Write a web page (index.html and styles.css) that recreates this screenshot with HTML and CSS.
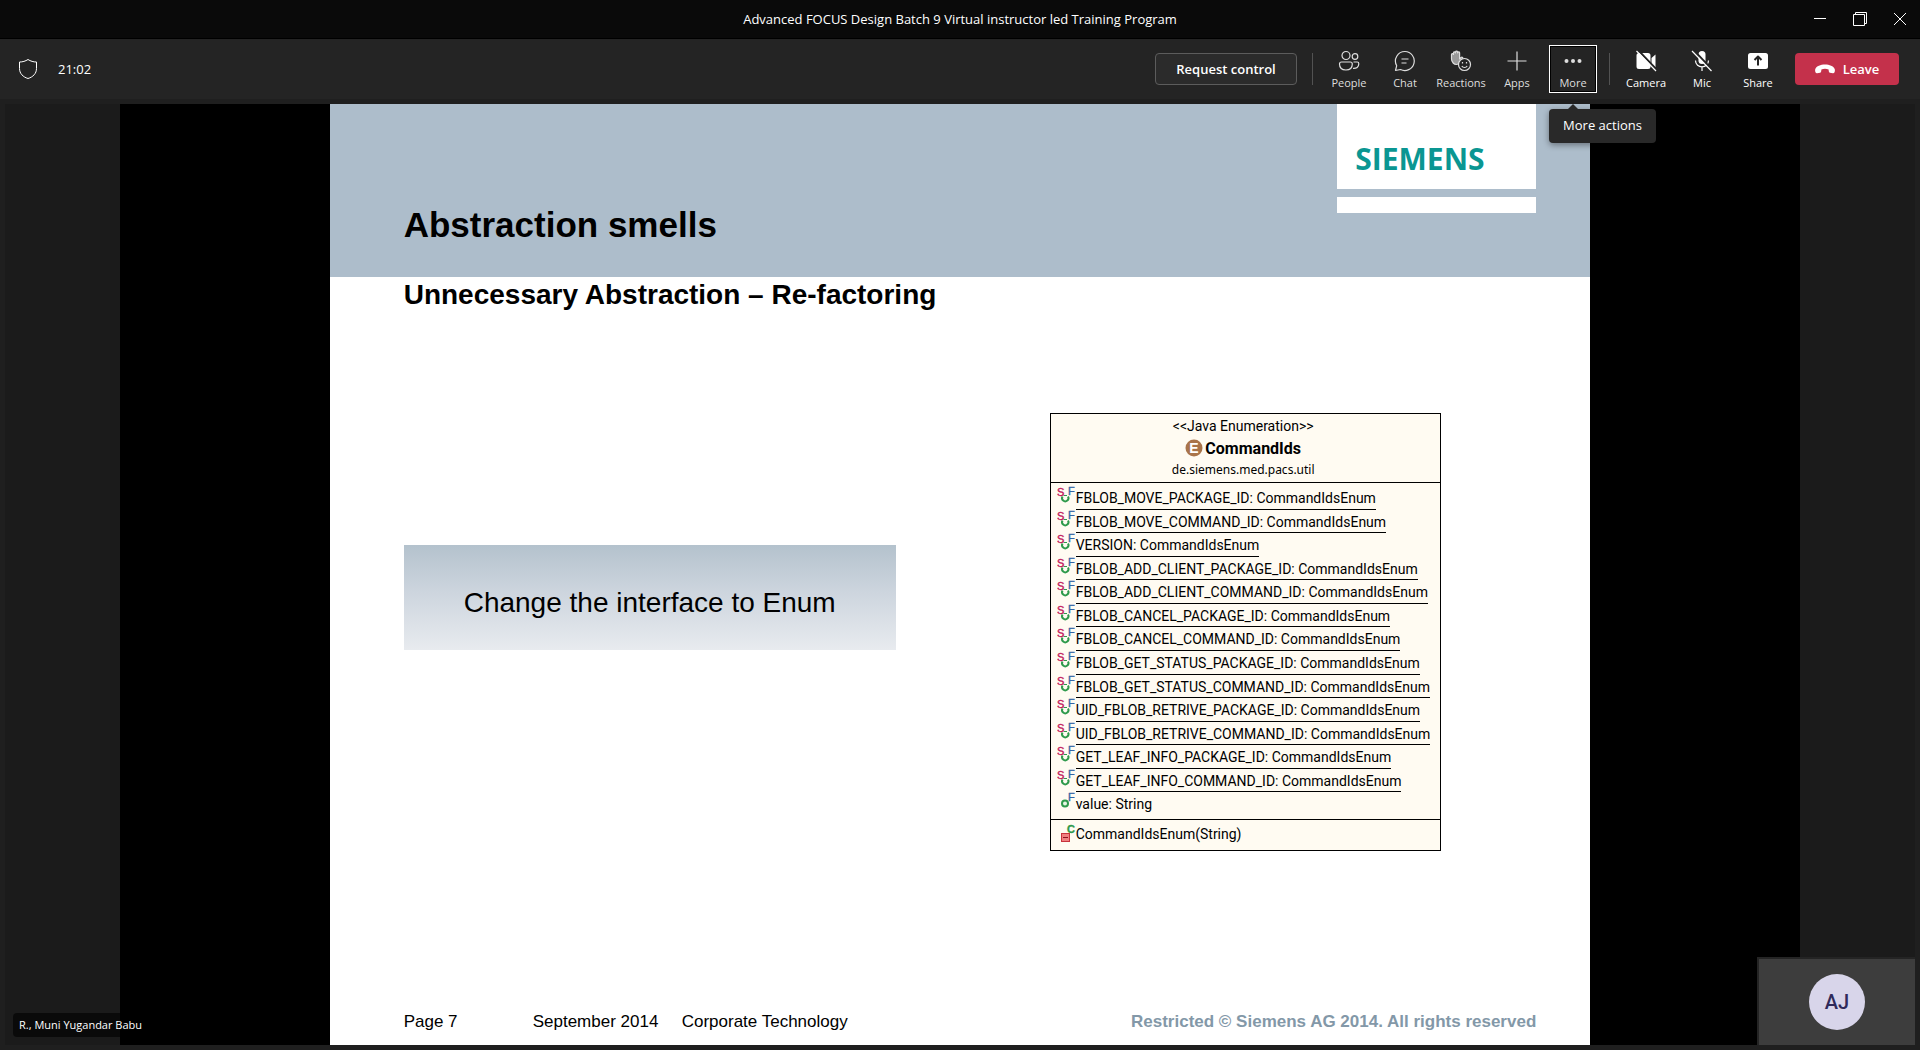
FILE: index.html
```html
<!DOCTYPE html>
<html lang="en">
<head>
<meta charset="utf-8">
<meta name="viewport" content="width=device-width, initial-scale=1">
<title>Advanced FOCUS Design Batch 9 Virtual instructor led Training Program</title>
<link rel="stylesheet" href="styles.css">
</head>
<body>
<svg class="defs" aria-hidden="true">
  <symbol id="static-final" viewBox="0 -4 20 22">
    <path d="M5.500 10.500a3.200 3.200 0 1 0 5.500 0" fill="none" stroke="#2f9a4c" stroke-width="2"/>
    <path d="M6.500 9.500h3.500" fill="none" stroke="#2f9a4c"/>
    <text class="mark mark-s" x="0" y="10">S</text>
    <text class="mark mark-f" x="11" y="9">F</text>
  </symbol>
  <symbol id="final" viewBox="0 -4 20 22">
    <circle cx="8" cy="11.500" r="3" fill="#e8f6e4" stroke="#2f9a4c" stroke-width="2"/>
    <text class="mark mark-f" x="11" y="9">F</text>
  </symbol>
  <symbol id="constructor" viewBox="0 -4 20 22">
    <rect x="4.500" y="8.500" width="8" height="8" fill="#f08080" stroke="#c8323c"/>
    <path d="M6 12.500h5" stroke="#8c1420" fill="none"/>
    <text class="mark mark-c" x="10" y="8">C</text>
  </symbol>
</svg>

<header class="titlebar">
  <h1 class="window-title">Advanced FOCUS Design Batch 9 Virtual instructor led Training Program</h1>
  <div class="window-buttons">
    <button class="window-button" type="button" aria-label="Minimize"><svg width="14" height="14" viewBox="0 0 14 14"><path d="M1 6.500h12"/></svg></button>
    <button class="window-button" type="button" aria-label="Restore"><svg width="14" height="14" viewBox="0 0 14 14"><path d="M.5 2.500h11v11H.5zM2.500 2.500v-2h11v11h-2"/></svg></button>
    <button class="window-button" type="button" aria-label="Close"><svg width="14" height="14" viewBox="0 0 14 14"><path d="M1 1l12 12M13 1L1 13"/></svg></button>
  </div>
</header>

<nav class="toolbar">
  <div class="status">
    <svg width="20" height="22" viewBox="0 0 20 22"><path d="M10 1.500C7.500 3.200 4.500 4 1.500 4v6.500c0 5 3.500 8.500 8.500 10 5-1.500 8.500-5 8.500-10V4c-3 0-6-.8-8.500-2.500z"/></svg>
    <span>21:02</span>
  </div>
  <div class="controls">
    <button class="request" type="button">Request control</button>
    <span class="divider"></span>
    <div class="group">
      <button class="tool" type="button"><svg viewBox="0 0 22 22"><circle cx="8" cy="5.500" r="4"/><circle cx="17" cy="6.500" r="2.800"/><path d="M3.500 12h8.800c1.200 0 2 .8 2 2 0 4-2.500 6-6.400 6s-6.400-2-6.400-6c0-1.200.8-2 2-2zM15.500 12h3.800c.9 0 1.500.8 1.500 1.800 0 3.400-2.400 4.800-5.800 4.500"/></svg>People</button>
      <button class="tool" type="button"><svg viewBox="0 0 22 22"><path d="M11 1.500a9.500 9.500 0 1 1-4.500 18L1.500 20.500l1.200-4.800A9.500 9.500 0 0 1 11 1.500zM7.500 9h7M7.500 13h5"/></svg>Chat</button>
      <button class="tool" type="button"><svg viewBox="0 0 22 22"><path class="hand" d="M1.500 9V4.500c0-1.300 1.800-1.300 2 0V2.800c.2-1.300 1.800-1.300 2 0V2c.2-1.300 1.900-1.300 2.100 0v.8c.2-1.200 1.900-1.200 2 0V9l1.500-1.500c1-.8 2.300.2 1.600 1.300L10 12.500c-1.600 2.500-5 2.600-6.800.5C1.900 11.500 1.500 10.500 1.500 9z"/><circle class="face" cx="14.500" cy="14.500" r="6"/><path d="M11.800 16c1.200 2 4.200 2 5.400 0M12.500 12v1.500M16.500 12v1.500"/></svg>Reactions</button>
      <button class="tool" type="button"><svg viewBox="0 0 22 22"><path d="M11 1.500v19M1.500 11h19"/></svg>Apps</button>
      <div class="more-wrap">
        <button class="tool tool-focus" type="button" aria-describedby="more-tip"><svg viewBox="0 0 22 22"><g class="solid-dim"><circle cx="4.500" cy="11" r="2"/><circle cx="11" cy="11" r="2"/><circle cx="17.500" cy="11" r="2"/></g></svg>More</button>
        <div class="tooltip" id="more-tip" role="tooltip">More actions</div>
      </div>
    </div>
    <span class="divider"></span>
    <div class="group bright">
      <button class="tool" type="button"><svg viewBox="0 0 22 22"><path class="solid" d="M1.500 5.500A2.500 2.500 0 0 1 4 3h9a2.500 2.500 0 0 1 2.500 2.500v11A2.500 2.500 0 0 1 13 19H4a2.500 2.500 0 0 1-2.500-2.500zM16.500 8l4-3.500v13l-4-3.500z"/><path class="cut" d="M3 0l19 20"/><path d="M1.500 1l19.500 20"/></svg>Camera</button>
      <button class="tool" type="button"><svg viewBox="0 0 22 22"><rect class="solid" x="7.500" y="1" width="7" height="13" rx="3.500"/><path d="M4.500 10.500c0 8.500 13 8.500 13 0M11 17v4"/><path class="cut" d="M2.500 0l19 20"/><path d="M1 1l19.500 20"/></svg>Mic</button>
      <button class="tool" type="button"><svg viewBox="0 0 22 22"><rect class="solid" x="1" y="3" width="20" height="16" rx="2.500"/><path class="ink" d="M11 15.500v-9M7.500 10L11 6.500l3.500 3.500"/></svg>Share</button>
    </div>
    <button class="leave" type="button"><svg width="20" height="10" viewBox="0 0 20 10"><path d="M10 .5C5.500.5 1.500 2 .3 5c-.4 1.200-.2 2.500.3 3.500.3.6.8.9 1.500.8l3-.6c.7-.2 1-.7 1.100-1.400l.2-1.900c2.300-.8 4.900-.8 7.200 0l.2 1.900c.1.700.4 1.200 1.100 1.400l3 .6c.7.1 1.200-.2 1.500-.8.5-1 .7-2.300.3-3.500C18.500 2 14.500.5 10 .5z"/></svg>Leave</button>
  </div>
</nav>

<main class="stage">
  <section class="video">
    <article class="slide">
      <div class="banner">
        <h2 class="slide-title">Abstraction smells</h2>
        <div class="brand">
          <div class="brand-name">SIEMENS</div>
          <div class="brand-strip"></div>
        </div>
      </div>
      <h3 class="slide-subtitle">Unnecessary Abstraction – Re-factoring</h3>
      <div class="slide-body">
        <p class="callout">Change the interface to Enum</p>
        <div class="uml">
          <div class="uml-head">
            <span class="uml-stereotype">&lt;&lt;Java Enumeration&gt;&gt;</span>
            <span class="uml-name"><svg width="18" height="20" viewBox="0 0 18 20"><circle cx="9" cy="10" r="8.500" fill="#a9744a"/><text class="enum-mark" x="9" y="15">E</text></svg>CommandIds</span>
            <span class="uml-package">de.siemens.med.pacs.util</span>
          </div>
          <ul class="uml-fields">
            <li><svg><use href="#static-final"/></svg><span class="static">FBLOB_MOVE_PACKAGE_ID: CommandIdsEnum</span></li>
            <li><svg><use href="#static-final"/></svg><span class="static">FBLOB_MOVE_COMMAND_ID: CommandIdsEnum</span></li>
            <li><svg><use href="#static-final"/></svg><span class="static">VERSION: CommandIdsEnum</span></li>
            <li><svg><use href="#static-final"/></svg><span class="static">FBLOB_ADD_CLIENT_PACKAGE_ID: CommandIdsEnum</span></li>
            <li><svg><use href="#static-final"/></svg><span class="static">FBLOB_ADD_CLIENT_COMMAND_ID: CommandIdsEnum</span></li>
            <li><svg><use href="#static-final"/></svg><span class="static">FBLOB_CANCEL_PACKAGE_ID: CommandIdsEnum</span></li>
            <li><svg><use href="#static-final"/></svg><span class="static">FBLOB_CANCEL_COMMAND_ID: CommandIdsEnum</span></li>
            <li><svg><use href="#static-final"/></svg><span class="static">FBLOB_GET_STATUS_PACKAGE_ID: CommandIdsEnum</span></li>
            <li><svg><use href="#static-final"/></svg><span class="static">FBLOB_GET_STATUS_COMMAND_ID: CommandIdsEnum</span></li>
            <li><svg><use href="#static-final"/></svg><span class="static">UID_FBLOB_RETRIVE_PACKAGE_ID: CommandIdsEnum</span></li>
            <li><svg><use href="#static-final"/></svg><span class="static">UID_FBLOB_RETRIVE_COMMAND_ID: CommandIdsEnum</span></li>
            <li><svg><use href="#static-final"/></svg><span class="static">GET_LEAF_INFO_PACKAGE_ID: CommandIdsEnum</span></li>
            <li><svg><use href="#static-final"/></svg><span class="static">GET_LEAF_INFO_COMMAND_ID: CommandIdsEnum</span></li>
            <li><svg><use href="#final"/></svg><span>value: String</span></li>
          </ul>
          <div class="uml-methods"><svg><use href="#constructor"/></svg><span>CommandIdsEnum(String)</span></div>
        </div>
      </div>
      <footer class="slide-footer">
        <span class="page">Page 7</span>
        <span class="date">September 2014</span>
        <span>Corporate Technology</span>
        <span class="rights">Restricted © Siemens AG 2014. All rights reserved</span>
      </footer>
    </article>
  </section>
  <div class="presenter">R., Muni Yugandar Babu</div>
  <div class="self-view"><span class="avatar">AJ</span></div>
</main>
</body>
</html>
```

FILE: styles.css
```css
* { box-sizing: border-box; }

body {
  margin: 0;
  min-height: 100vh;
  display: flex;
  flex-direction: column;
  background: #1f1f1f;
  color: #fff;
  font-family: "Open Sans", "Noto Sans", sans-serif;
  font-size: 13px;
}

h1, h2, h3, p, ul { margin: 0; padding: 0; }
button { font: inherit; color: inherit; padding: 0; border: 0; background: none; }
svg { flex: none; fill: none; }
.defs { position: absolute; width: 0; height: 0; }

/* Window title bar */
.titlebar {
  display: grid;
  grid-template-columns: 1fr auto 1fr;
  align-items: center;
  height: 39px;
  background: #0a0a0a;
  border-bottom: 1px solid #000;
}
.window-title { grid-column: 2; font-size: 13px; font-weight: 400; line-height: 18px; }
.window-buttons { display: flex; justify-content: flex-end; }
.window-button { display: grid; place-items: center; width: 40px; height: 38px; }
.window-button svg { stroke: #fff; }

/* Meeting toolbar */
.toolbar {
  display: flex;
  justify-content: space-between;
  align-items: center;
  height: 60px;
  padding: 0 21px 0 18px;
  background: #242424;
}
.status { display: flex; align-items: center; gap: 20px; font-size: 13px; }
.status svg { stroke: #fff; }
.controls { display: flex; align-items: center; gap: 12px; }
.request {
  width: 142px;
  height: 32px;
  margin-right: 3px;
  border: 1px solid #5c5c5c;
  border-radius: 4px;
  background: #2b2b2b;
  font-weight: 600;
  line-height: 18px;
}
.divider { width: 1px; height: 32px; background: #525252; }
.group { display: flex; gap: 8px; color: #dedede; }
.bright { color: #fff; }
.tool {
  display: flex;
  flex-direction: column;
  align-items: center;
  gap: 4px;
  width: 48px;
  height: 48px;
  padding-top: 5px;
  font-size: 11px;
  line-height: 14px;
}
.tool svg { width: 22px; height: 22px; stroke: currentColor; stroke-width: 1.2; stroke-linejoin: round; }
.tool .solid { fill: #fff; stroke: none; }
.tool .solid-dim { fill: #dedede; stroke: none; }
.tool .hand { fill: #9a9a9a; }
.tool .face { fill: #242424; }
.tool .cut { stroke: #242424; stroke-width: 2; }
.tool .ink { stroke: #242424; stroke-width: 2; }
.tool-focus { outline: 1px solid #fff; outline-offset: -1px; background: #242424; border: 2px solid #000; padding-top: 3px; }
.more-wrap { position: relative; }
.tooltip {
  position: absolute;
  z-index: 2;
  top: 64px;
  left: 0;
  width: 107px;
  padding-bottom: 2px;
  border-radius: 4px;
  background: #292929;
  color: #fff;
  text-align: center;
  line-height: 32px;
  box-shadow: 0 2px 6px rgba(0, 0, 0, .4);
}
.tooltip::before {
  content: "";
  position: absolute;
  left: 19px;
  bottom: 100%;
  border: 5px solid transparent;
  border-top-width: 0;
  border-bottom-color: #292929;
}
.leave {
  display: flex;
  justify-content: center;
  align-items: center;
  gap: 8px;
  width: 104px;
  height: 32px;
  margin-left: 1px;
  border-radius: 4px;
  background: #c4314b;
  font-weight: 600;
}
.leave svg { fill: #fff; }

/* Shared content */
.stage {
  position: relative;
  flex: 1;
  display: flex;
  justify-content: center;
  margin: 5px;
  background: #1b1b1b;
}
.video { display: flex; justify-content: center; width: 88%; background: #000; }
.slide {
  display: flex;
  flex-direction: column;
  width: 75%;
  background: #fff;
  color: #000;
  font-family: "Liberation Sans", Arial, sans-serif;
}
.banner {
  display: flex;
  justify-content: space-between;
  height: 173px;
  padding: 0 54px 0 74px;
  background: #adbdcb;
}
.slide-title { align-self: flex-end; margin-bottom: 32px; font-size: 35px; line-height: 40px; }
.brand { width: 199px; }
.brand-name {
  height: 85px;
  padding: 35px 0 0 18px;
  background: #fff;
  color: #0a9692;
  font: 700 30px/40px "Open Sans", sans-serif;
}
.brand-strip { height: 16px; margin-top: 8px; background: #fff; }
.slide-subtitle { padding: 2px 74px 0; font-size: 28px; line-height: 32px; }
.slide-body {
  flex: 1;
  display: flex;
  align-items: flex-start;
  gap: 154px;
  padding: 102px 54px 0 74px;
}
.callout {
  width: 492px;
  height: 105px;
  margin-top: 132px;
  background: linear-gradient(#b4c2cd, #cdd5de 45%, #e8ebef);
  font-size: 28px;
  line-height: 116px;
  text-align: center;
}
.slide-footer {
  display: flex;
  align-items: center;
  padding: 0 54px 13px 74px;
  font-size: 17px;
  line-height: 20px;
}
.page { width: 129px; }
.date { width: 149px; }
.rights { margin-left: auto; color: #8398a8; font-weight: 700; }

/* Class diagram box */
.uml {
  display: flex;
  flex-direction: column;
  width: 391px;
  height: 438px;
  border: 1px solid #000;
  background: #fffbf2;
  font-family: Roboto, "Liberation Sans", sans-serif;
  font-size: 14px;
  line-height: 19px;
}
.uml-head {
  flex: none;
  display: flex;
  flex-direction: column;
  align-items: center;
  height: 68px;
  padding: 3px 4px 0 0;
}
.uml-name { display: flex; align-items: center; gap: 2px; height: 24px; font-size: 16px; font-weight: 700; }
.enum-mark { fill: #fff; font: 700 14px "Liberation Sans", sans-serif; text-anchor: middle; }
.uml-package { font-family: "Noto Sans", sans-serif; font-size: 12px; }
.uml-fields {
  flex: 1;
  display: grid;
  grid-auto-rows: 1fr;
  padding: 3px 6px;
  border-top: 1px solid #000;
  list-style: none;
}
.uml-fields li { display: flex; align-items: stretch; white-space: nowrap; }
.uml-fields svg, .uml-methods svg { width: 20px; height: 22px; margin: -4px -1px 0 0; }
.uml-fields span { padding-top: 3px; }
.static { border-bottom: 1px solid #000; }
.uml-methods {
  flex: none;
  display: flex;
  height: 31px;
  padding: 5px 6px 0;
  border-top: 1px solid #000;
}
.mark { font: 11px "Liberation Sans", sans-serif; stroke-width: .4px; }
.mark-s { fill: #c2185b; stroke: #c2185b; }
.mark-f { fill: #3465a4; stroke: #3465a4; }
.mark-c { fill: #2f9a4c; stroke: #2f9a4c; font-weight: 700; }

/* Overlays on the shared content */
.presenter {
  position: absolute;
  left: 8px;
  bottom: 8px;
  padding: 0 6px;
  border-radius: 4px;
  background: rgba(0, 0, 0, .6);
  font-size: 11px;
  line-height: 24px;
}
.self-view {
  position: absolute;
  right: 0;
  bottom: 0;
  display: grid;
  place-items: center;
  width: 158px;
  height: 88px;
  border: solid #242424;
  border-width: 2px 0 0 2px;
  background: #3d3d3d;
}
.avatar {
  width: 56px;
  border-radius: 50%;
  background: #d8d5ea;
  color: #2f2a5a;
  font: 500 20px/56px Roboto, sans-serif;
  text-align: center;
}
```
